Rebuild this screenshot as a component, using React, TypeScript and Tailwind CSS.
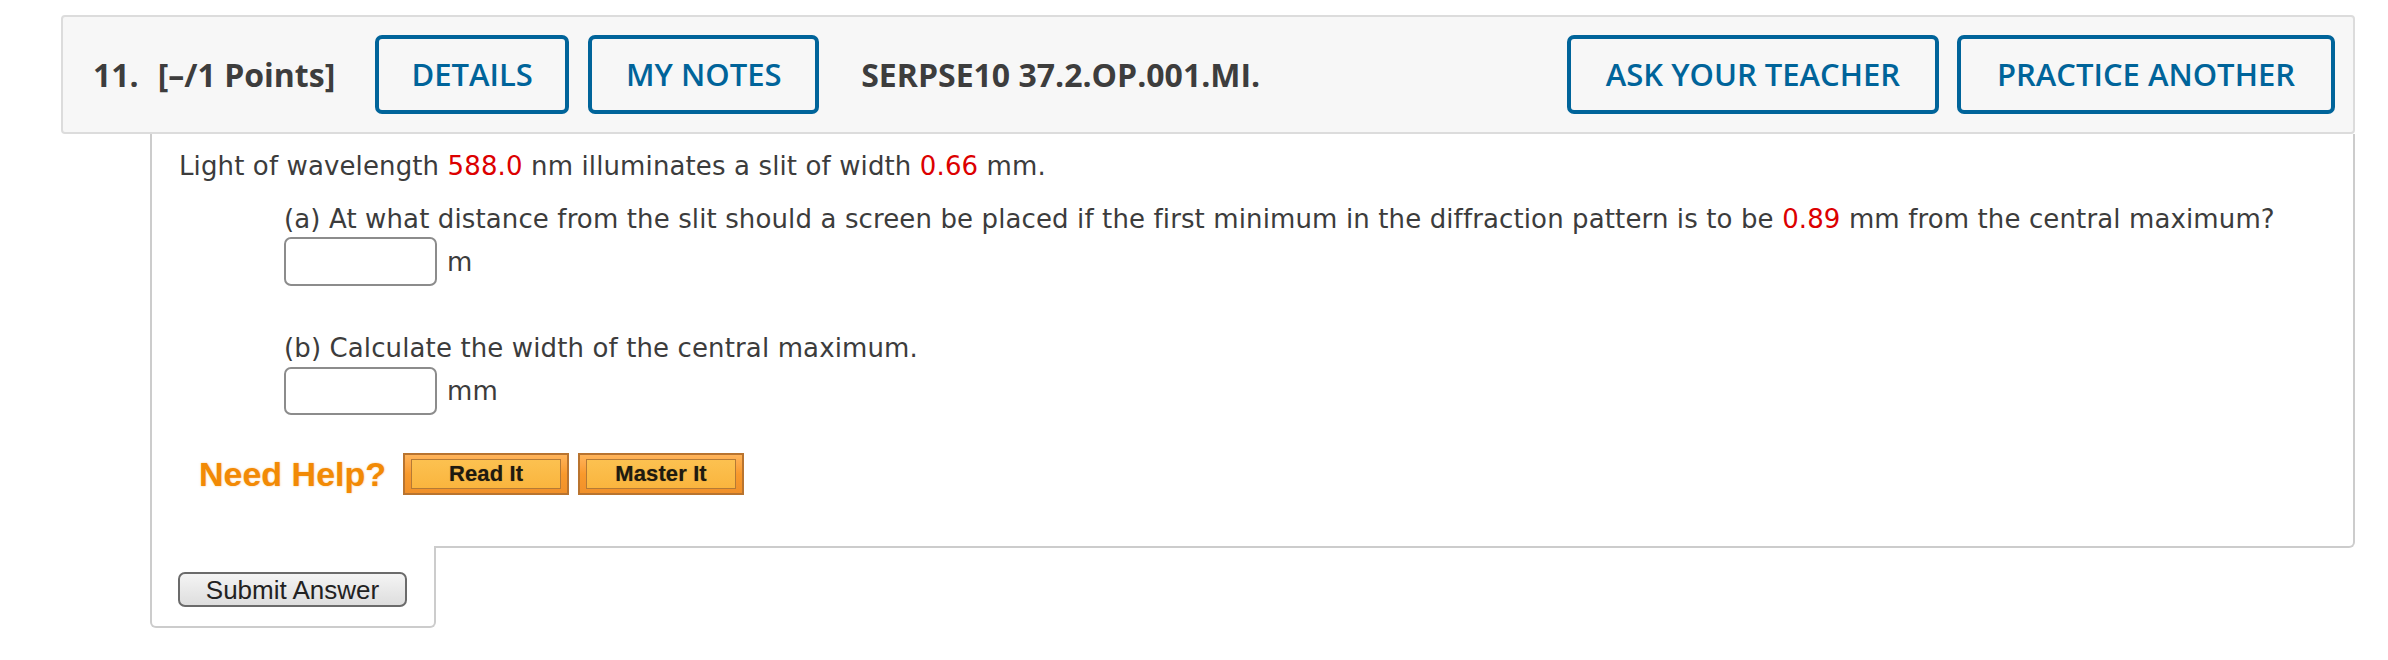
import React from "react";

const blue = "border-[4px] border-[#00649a] rounded-[7px] h-[79px] flex items-center justify-center text-[#00649a] text-[31px] font-semibold";

function HelpButton({ label, width }: { label: string; width: string }) {
  return (
    <div className={`${width} h-[42px] border-2 border-[#b9742f] bg-gradient-to-b from-[#ffb45a] via-[#f99a2c] to-[#f0902a] px-[6px] py-[4px]`}>
      <div className="h-full border border-[#b57a35] bg-gradient-to-b from-[#fcc150] to-[#fab53e] flex items-center justify-center">
        <span className="font-['Liberation_Sans',Arial,sans-serif] font-bold text-[22px] leading-none text-[#1e1a10] [text-shadow:0_0_1px_rgba(0,0,0,0.4)]">{label}</span>
      </div>
    </div>
  );
}

function Red({ children }: { children: React.ReactNode }) {
  return <span className="text-[#dc0000]">{children}</span>;
}

export default function App() {
  return (
    <div className="w-[2388px] h-[660px] bg-white pt-[15px] pl-[61px] pr-[33px]">
      {/* header */}
      <div className="h-[119px] border-2 border-[#dcdcdc] rounded-[4px] bg-[#f7f7f7] flex items-center justify-between pl-[30px] pr-[18px] font-['Open_Sans',sans-serif]">
        <div className="flex items-center">
          <span className="text-[32px] font-bold text-[#3d3d3d]">11.</span>
          <span className="ml-[19px] text-[32px] font-bold text-[#3d3d3d]">[–/1 Points]</span>
          <div className={`${blue} ml-[40px] w-[194px]`}>DETAILS</div>
          <div className={`${blue} ml-[19px] w-[231px]`}>MY NOTES</div>
          <span className="ml-[42px] text-[32px] font-bold text-[#3d3d3d]">SERPSE10 37.2.OP.001.MI.</span>
        </div>
        <div className="flex items-center gap-[18px]">
          <div className={`${blue} w-[372px]`}>ASK YOUR TEACHER</div>
          <div className={`${blue} w-[378px]`}>PRACTICE ANOTHER</div>
        </div>
      </div>

      {/* body */}
      <div className="ml-[89px]">
        <div className="border-l-2 border-r-2 border-b-2 border-[#cccccc] rounded-br-[6px] pl-[27px] pt-[17px] pb-[51px] font-['DejaVu_Sans',Verdana,sans-serif] text-[26px] leading-[30px] tracking-[0.12px] text-[#3c3c3c]">
          <div>
            Light of wavelength <Red>588.0</Red> nm illuminates a slit of width <Red>0.66</Red> mm.
          </div>
          <div className="pl-[105px] mt-[23px]">
            <div>
              (a) At what distance from the slit should a screen be placed if the first minimum in the diffraction pattern is to be <Red>0.89</Red> mm from the central maximum?
            </div>
            <div className="flex items-center mt-[3px]">
              <div className="w-[153px] h-[49px] border-2 border-[#8c8c8c] rounded-[7px] bg-white" />
              <span className="ml-[10px]">m</span>
            </div>
            <div className="mt-[47px]">(b) Calculate the width of the central maximum.</div>
            <div className="flex items-center mt-[4px]">
              <div className="w-[153px] h-[48px] border-2 border-[#8c8c8c] rounded-[7px] bg-white" />
              <span className="ml-[10px]">mm</span>
            </div>
          </div>
          <div className="flex items-center mt-[38px] pl-[20px]">
            <span className="font-['Liberation_Sans',Arial,sans-serif] font-bold text-[34px] leading-none tracking-normal text-[#f28a05] [text-shadow:0_0_2px_rgba(242,138,5,0.5)]">Need Help?</span>
            <div className="ml-[17px]">
              <HelpButton label="Read It" width="w-[166px]" />
            </div>
            <div className="ml-[9px]">
              <HelpButton label="Master It" width="w-[166px]" />
            </div>
          </div>
        </div>
        <div className="-mt-[2px] w-[286px] h-[82px] bg-white border-l-2 border-r-2 border-b-2 border-[#cccccc] rounded-b-[6px] pl-[26px] pt-[26px]">
          <div className="w-[229px] h-[35px] border-2 border-[#6b6b6b] rounded-[7px] bg-gradient-to-b from-[#f4f4f4] to-[#dedede] flex items-center justify-center font-['Liberation_Sans',Arial,sans-serif] text-[26px] leading-none text-[#222]">
            Submit Answer
          </div>
        </div>
      </div>
    </div>
  );
}
